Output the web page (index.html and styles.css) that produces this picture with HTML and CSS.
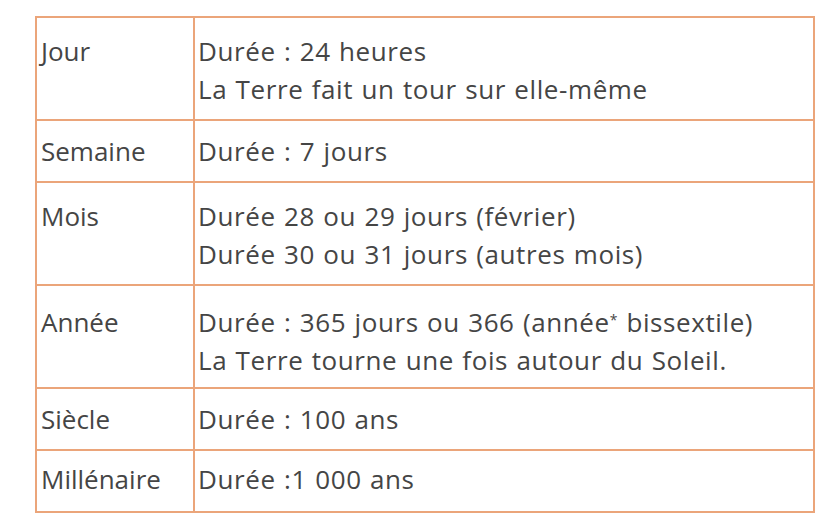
FILE: index.html
```html
<!DOCTYPE html>
<html lang="fr">
<head>
<meta charset="utf-8">
<title>Durées</title>
<link rel="stylesheet" href="styles.css">
</head>
<body>
<div class="page">
  <table class="durations">
    <colgroup><col class="c-name"><col class="c-desc"></colgroup>
    <tbody>
      <tr class="tall r1">
        <td class="name">Jour</td>
        <td class="desc">Durée : 24 heures<br>La Terre fait un tour sur elle-même</td>
      </tr>
      <tr class="short r2">
        <td class="name">Semaine</td>
        <td class="desc">Durée : 7 jours</td>
      </tr>
      <tr class="tall r3">
        <td class="name">Mois</td>
        <td class="desc">Durée 28 ou 29 jours (février)<br>Durée 30 ou 31 jours (autres mois)</td>
      </tr>
      <tr class="tall r4">
        <td class="name">Année</td>
        <td class="desc">Durée : 365 jours ou 366 (année<sup class="star">*</sup> bissextile)<br>La Terre tourne une fois autour du Soleil.</td>
      </tr>
      <tr class="short r5">
        <td class="name">Siècle</td>
        <td class="desc">Durée : 100 ans</td>
      </tr>
      <tr class="short r6">
        <td class="name">Millénaire</td>
        <td class="desc">Durée :1 000 ans</td>
      </tr>
    </tbody>
  </table>
</div>
</body>
</html>
```

FILE: styles.css
```css
html, body {
  margin: 0;
  padding: 0;
  background: #ffffff;
}

.page {
  padding: 16px 0 0 35px;
}

.durations {
  border-collapse: collapse;
  width: 780px;
  table-layout: fixed;
  font-family: "Open Sans", "DejaVu Sans", sans-serif;
  font-size: 26px;
  letter-spacing: 0.6px;
  word-spacing: 1px;
  color: #454545;
  border: 2px solid #dcae95;
}

.c-name { width: 158px; }

.durations td {
  border: 2px solid #eba57a;
  vertical-align: top;
  line-height: 38px;
  padding: 11px 4px 0 4px;
  box-sizing: border-box;
  white-space: nowrap;
}

.name { letter-spacing: 0; }

.durations td.desc {
  padding-left: 3px;
}

.tall td { height: 103px; padding-top: 14px; }
.short td { height: 62px; }
.r4 td { padding-top: 17px; }
.r6 td { padding-top: 9px; }

.star {
  font-size: 14px;
  line-height: 0;
  vertical-align: 7px;
}
```
